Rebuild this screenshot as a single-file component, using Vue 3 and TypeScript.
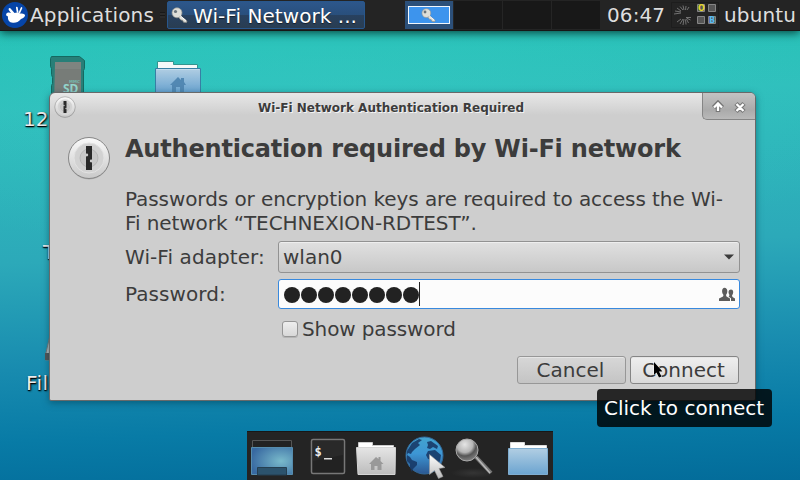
<script setup lang="ts">
import { ref } from 'vue'

const password = ref('12345678')
const workspaces = [0, 1, 2, 3]
</script>

<template>
  <div class="desktop">
    <svg class="icon-sd" width="38" height="50" viewBox="0 0 38 50">
      <path d="M2.500 .5h28l5 4v8l-1 2v35h-32v-20l1-2v-6l-1-3v-6l-1-2v-8z" fill="#287f78" stroke="#146960" />
      <path d="M6 6h26v44H5z" fill="#777c78" />
      <path d="M6 6h26v7H6z" fill="#868a86" opacity=".6" />
      <text><tspan x="20" y="27" class="mmc">MMC</tspan><tspan x="14" y="36.500" class="sd">SD</tspan></text>
    </svg>
    <svg class="icon-home" width="48" height="45" viewBox="0 0 48 45">
      <path d="M3.500 9V1.500h16v3h24V10z" fill="#f5f8f8" stroke="#33948f" />
      <path d="M1.500 8.500h45V44h-45z" fill="url(#folderHome)" stroke="#377fa4" />
      <path d="M2.500 9.500h43" stroke="#c3dced" />
      <path d="M16 25l8-8 3 3v-2h3v4l2 3h-2v7h-4v-5h-4v5h-4v-7z" fill="#5288b3" />
    </svg>
    <span class="label l-sd">128</span>
    <span class="label l-trash">Trash</span>
    <span class="label l-fs">File System</span>
    <svg class="icon-drive" width="10" height="26" viewBox="0 0 10 26"><path d="M.5 20L5 0h5v25H.5z" fill="#b9b9b9" stroke="#777" /><path d="M0 18h10v7H0z" fill="#555" /></svg>

    <header class="panel">
      <svg class="logo" width="26" height="26" viewBox="0 0 26 26">
        <circle cx="13" cy="13" r="13" fill="#0645a8" />
        <path d="M4.500 11.500C5.500 10 8 10.500 9 11L6.800 8C6 6 8 5.300 9 7l3.500 4c2-1 4-.7 5.500.5 2 0 4.500 0 5 1.500.4 1.500-1.500 3-4 4-2.500 3-5 4-8 3.800-4-.3-5.500-3-5-6.300-1.500-.5-2.500-1.500-1.500-3z" fill="#fff" />
        <path d="M14.800 5.500l.8 4.500M19.500 6l-2 4.500" stroke="#fff" stroke-width="1.700" stroke-linecap="round" />
      </svg>
      <span class="apps">Applications</span>
      <span class="grip"></span>
      <div class="task">
        <svg width="18" height="17" viewBox="0 0 18 17"><use href="#key" /></svg>
        <span>Wi-Fi Network ...</span>
      </div>
      <div class="pager">
        <div v-for="n in workspaces" :key="n" class="ws" :class="{ active: n === 0 }">
          <div v-if="n === 0" class="mini"><svg width="16" height="15" viewBox="0 0 18 17"><use href="#key" /></svg></div>
        </div>
      </div>
      <span class="clock">06:47</span>
      <svg class="tray" width="48" height="26" viewBox="0 0 48 26">
        <path d="M.5.5h47v25H.5z" fill="none" stroke="#1d1d1d" />
        <g fill="none" stroke="#858585" stroke-width=".8">
          <path d="M3 12l7-1M4 9l6 1M6 6l4 3M9 4.500l3 3.500M12 3.500l1 4.500M15 4l-.5 4M18 5l-2 3" />
          <path d="M6 20l4-3M9 22l3-5M12 23l1-6M15 22.500l-.5-5M17.500 21l-2-4M19.500 18l-4-2M20 15.500l-5 0" />
        </g>
        <path d="M26.500 2.500h7v7h-7zM37.500 2.500h7v7h-7zM26.500 14.500h7v7h-7zM37.500 14.500h7v7h-7z" fill="#565656" stroke="#858585" />
        <text x="27" y="9" class="led yellow">O</text>
        <text x="38" y="21" class="led blue">B</text>
      </svg>
      <span class="user">ubuntu</span>
    </header>

    <main class="dialog">
      <div class="titlebar">
        <svg width="22" height="22" viewBox="0 0 44 44"><use href="#lock" /></svg>
        <h1>Wi-Fi Network Authentication Required</h1>
        <div class="winbtns">
          <svg width="52" height="26" viewBox="0 0 52 26">
            <path d="M15 19v-8M10.500 14.500l4.500-4.500 4.500 4.500M33 10.500l8 8M41 10.500l-8 8" stroke="#777" stroke-width="4.500" fill="none" />
            <path d="M15 18v-7M11 14.500l4-4 4 4M33.500 11l7 7M40.500 11l-7 7" stroke="#fff" stroke-width="2.300" fill="none" />
          </svg>
        </div>
      </div>
      <div class="content">
        <svg class="biglock" width="44" height="44" viewBox="0 0 44 44"><use href="#lock" /></svg>
        <section class="form">
          <h2>Authentication required by Wi-Fi network</h2>
          <p>Passwords or encryption keys are required to access the Wi-<br />Fi network “TECHNEXION-RDTEST”.</p>
          <div class="field">
            <label>Wi-Fi adapter:</label>
            <div class="combo"><span>wlan0</span><svg width="10" height="6" viewBox="0 0 10 6"><path d="M0 .5h10L5 5.500z" fill="#3c3c3c" /></svg></div>
          </div>
          <div class="field second">
            <label>Password:</label>
            <div class="entry">
              <div class="dots"><i v-for="(c, k) in password" :key="k"></i></div>
              <b class="caret"></b>
              <svg width="17" height="14" viewBox="0 0 17 14" fill="#5c5c5c">
                <path d="M0 14v-2.500l4-2L4.500 8C2.500 6 2.500 1 5.500.8 9 1 9 6 7 8l.5 1.500 3.500 2V14z" />
                <path d="M9.700 9.800l.8-1.800C8.800 5.500 9.500 2.500 12 2.500s3 3.500 1 6l.5 1.500 2.500 1.500V14h-4v-2.800z" />
              </svg>
            </div>
          </div>
          <div class="check"><span class="box"></span>Show password</div>
          <div class="actions">
            <button type="button">Cancel</button>
            <button type="button" class="hover">Connect</button>
          </div>
        </section>
      </div>
    </main>

    <svg class="cursor" width="12" height="18" viewBox="0 0 12 18"><path d="M2 1v13l2.500-2.500 2.500 5 2.500-1-2.500-5h3.500z" fill="#000" stroke="#fff" stroke-width=".9" paint-order="stroke" /></svg>
    <div class="tooltip">Click to connect</div>

    <footer class="dock">
      <svg width="306" height="49" viewBox="0 0 306 49">
        <defs>
          <linearGradient id="folderHome" x2="0" y2="1"><stop stop-color="#b1cee3" /><stop offset=".65" stop-color="#6ba4d0" /></linearGradient>
          <linearGradient id="folderBlue" x2="0" y2="1"><stop stop-color="#b1cee3" /><stop offset="1" stop-color="#6ba4d0" /></linearGradient>
          <linearGradient id="folderGray" x2="0" y2="1"><stop stop-color="#e5e5e5" /><stop offset="1" stop-color="#bcbcbc" /></linearGradient>
          <radialGradient id="screen" cx=".72" cy=".5" r=".75"><stop stop-color="#79bacb" /><stop offset="1" stop-color="#3869a1" /></radialGradient>
          <linearGradient id="sea" x2="0" y2="1"><stop stop-color="#43a4cf" /><stop offset=".45" stop-color="#3d96d4" /><stop offset="1" stop-color="#2b5791" /></linearGradient>
          <radialGradient id="lens" cx=".4" cy=".25" r=".8"><stop stop-color="#e5e5e5" /><stop offset=".45" stop-color="#b5b5b5" /><stop offset=".65" stop-color="#555" /><stop offset="1" stop-color="#888" /></radialGradient>
          <radialGradient id="shade"><stop stop-color="#353535" /><stop offset="1" stop-color="#242424" /></radialGradient>
          <linearGradient id="metal" x2="0" y2="1"><stop stop-color="#fafafa" /><stop offset="1" stop-color="#c9c9c9" /></linearGradient>
          <linearGradient id="arrow" x2="0" y2="1"><stop stop-color="#fff" /><stop offset="1" stop-color="#bbb" /></linearGradient>
          <g id="key">
            <path d="M8.500 8L16 14l-.5 1.500-3-.3-1-2-1.700-.2-2-2.500" fill="#e2e2dd" stroke="#8b8b85" stroke-width=".8" />
            <circle cx="6" cy="5.800" r="5" fill="#deded8" stroke="#979792" stroke-width=".7" />
            <circle cx="4.500" cy="4.500" r="1.600" fill="#69747b" />
            <path d="M9 8.500l6 5.200" stroke="#fff" stroke-width="1" />
          </g>
          <g id="lock">
            <ellipse cx="22" cy="24" rx="20" ry="19.500" fill="#777" opacity=".4" />
            <circle cx="22" cy="22" r="20.500" fill="url(#metal)" stroke="#868686" />
            <circle cx="22" cy="22" r="15" fill="#d2d2d2" stroke="#e2e2e2" />
            <circle cx="22" cy="22" r="9" fill="#c7c7c7" stroke="#aaa" stroke-width=".6" />
            <path d="M19 10h6v24h-6z" fill="#292929" />
            <circle cx="19.800" cy="19" r="1.400" fill="#ccc" /><circle cx="24.200" cy="25" r="1.400" fill="#ccc" />
          </g>
        </defs>
        <path d="M5.500 8.500h39v9h-39z" fill="#222" stroke="#555" />
        <path d="M4.500 15.500h41v27h-41z" fill="url(#screen)" stroke="#568cad" />
        <path d="M10.500 43V35.500h29V43z" fill="#2c536d" stroke="#253f51" />
        <rect x="64.500" y="7.500" width="33" height="34" rx="1.500" fill="#222" stroke="#777" stroke-width="1.500" />
        <path d="M66 9h30v14L66 29z" fill="#292929" />
        <text x="67.500" y="23.500" class="prompt">$</text><path d="M77 26h8v1.500h-8z" fill="#ddd" />
        <path d="M111.500 17v-6.500h14v3h21V17z" fill="#fff" stroke="#ccc" />
        <path d="M109.500 15.500h39L148 42.500h-37z" fill="url(#folderGray)" stroke="#d5d5d5" />
        <path d="M122 32l7-7 2.500 2v-2h2v4l3 3h-2v6h-4v-4h-3v4h-3.500v-6z" fill="#999" />
        <circle cx="177.500" cy="23.500" r="18.500" fill="url(#sea)" stroke="#326a9b" />
        <path d="M160 19l5-8 7-4 3 1-4 3 2 2-5 4-3 3-1 2-3-1-1 2 3 2 2 3 5 2 0 3-4 4-1 3-2-4 0-4-3-3zM180 10l4-1 7 5-1 3-4-2-3 2-3-1 1-3zM181 19l7-1 6 5-1 6-4 5-3-6-5-1-2-4z" fill="#173865" opacity=".88" />
        <path d="M182.500 22.500v20l5-4 4 8 4.500-2-4-8 6-1z" fill="url(#arrow)" stroke="#999" stroke-width=".6" />
        <ellipse cx="226" cy="41" rx="22" ry="5" fill="url(#shade)" />
        <path d="M229 25l15 16" stroke="#777" stroke-width="4" /><path d="M229 25l14 16" stroke="#bbb" stroke-width="1.300" />
        <circle cx="220" cy="18" r="11" fill="url(#lens)" stroke="#aaa" />
        <path d="M263.500 17v-6.500h14v3h22V17z" fill="#fff" stroke="#ddd" />
        <path d="M261.500 16.500h39v26h-39z" fill="url(#folderBlue)" stroke="#7fadd0" />
      </svg>
    </footer>
  </div>
</template>

<style>
body { margin: 0; overflow: hidden; }
</style>

<style scoped>
* { box-sizing: border-box; }
.desktop { position: relative; width: 800px; height: 480px; overflow: hidden; font: 20px/24px "DejaVu Sans", sans-serif; color: #3c3c3c; background: radial-gradient(ellipse 620px 170px at 42% 18%, #38cbc566, transparent), linear-gradient(178deg, #24c2b5 5%, #2fbfbc 22%, #2ca9b9 52%, #188baf 73%, #087ba6 87%, #036c9a 100%); }
.panel { position: relative; display: flex; align-items: center; height: 31px; background: #242424; border-bottom: 1px solid #171717; box-shadow: 0 2px 9px #06463f; color: #dedede; }
.logo { margin-left: 2px; }
.apps { width: 128px; margin-left: 2px; letter-spacing: .15px; }
.grip { width: 5px; height: 6px; margin-left: 2px; background: repeating-linear-gradient(#191919 0 1px, #2b2b2b 1px 3px); }
.task { display: flex; align-items: center; gap: 4px; width: 198px; height: 28px; margin-left: 2px; padding-left: 3px; border: 1px solid #28578d; border-radius: 2px; background: linear-gradient(#2d578b, #294f7c 50%, #28415f 51%, #293d52); color: #fff; white-space: nowrap; text-shadow: 0 1px 1px #0008; }
.task span { letter-spacing: .06px; padding-top: 1px; }
.panel svg { flex: none; }
.pager { display: flex; gap: 1px; margin-left: 40px; background: #252525; }
.ws { width: 48px; height: 28px; background: #181818; }
.ws.active { padding: 5px 3px; background: #2c507a; }
.mini { display: grid; place-items: center; width: 42px; height: 18px; border: 1px solid #f2f6fb; background: #3d94ed; }
.clock { width: 61px; margin-left: 7px; letter-spacing: .1px; }
.tray { margin-left: 3px; }
.user { margin-left: 5px; letter-spacing: .15px; }
.led { font: bold 8px "DejaVu Sans", sans-serif; }
.yellow { fill: #e5d826; }
.blue { fill: #58baf2; }
.icon-sd { position: absolute; left: 49px; top: 56px; }
.icon-home { position: absolute; left: 154px; top: 60px; }
.icon-drive { position: absolute; left: 45px; top: 335px; }
.mmc { font: bold 4px "DejaVu Sans", sans-serif; fill: #76b9af; }
.sd { font: bold 12px "Noto Sans", sans-serif; fill: #94d5cc; }
.label { position: absolute; color: #ececec; text-shadow: 1px 1px 2px #000, 0 1px 1px #000; white-space: nowrap; }
.l-sd { left: 23px; top: 107px; }
.l-trash { left: 43px; top: 240px; }
.l-fs { left: 26px; top: 371px; letter-spacing: .4px; }
.dialog { position: absolute; left: 49px; top: 92px; width: 707px; height: 309px; overflow: hidden; border: 1px solid #696969; border-radius: 6px 6px 2px 2px; background: linear-gradient(#e7e7e7, #cecece 22px); box-shadow: 0 2px 7px #003c5088; }
.titlebar { display: flex; height: 27px; padding-left: 4px; align-items: flex-start; }
.titlebar > svg { margin-top: 3px; }
h1 { flex: 1; margin: 3px 0 0; padding-left: 4px; text-align: center; font-size: 12px; line-height: 24px; text-shadow: 1px 1px #f4f4f4; }
.winbtns { width: 53px; height: 27px; border: solid #858585; border-width: 0 0 1px 1px; border-radius: 0 0 0 5px; background: linear-gradient(#c3c3c3, #aaa 65%, #b9b9b9); }
.winbtns svg { display: block; }
.content { display: flex; padding: 16px 15px 0 17px; }
.biglock { flex: none; }
.form { flex: 1; margin-left: 14px; }
h2 { margin: -1px 0 0; font-size: 24px; line-height: 28px; letter-spacing: -.2px; white-space: nowrap; }
p { margin: 24px 0 0; letter-spacing: -.08px; white-space: nowrap; }
.field { display: flex; height: 32px; margin-top: 6px; align-items: center; }
.field.second { height: 30px; margin-top: 6px; }
label { width: 153px; letter-spacing: .08px; }
.combo { display: flex; flex: 1; height: 32px; align-items: center; justify-content: space-between; padding: 0 5px 0 4px; border: 1px solid #929292; border-radius: 3px; background: linear-gradient(#e0e0e0, #c8c8c8); box-shadow: inset 0 1px #eee; }
.entry { display: flex; flex: 1; height: 30px; align-items: center; padding: 0 4px 0 5px; border: 1px solid #3889de; border-radius: 3px; background: #fcfcfc; }
.dots { display: flex; gap: 1px; }
.dots i { width: 16px; height: 16px; border-radius: 50%; background: #222; margin-top: 2px; }
.caret { width: 1px; height: 24px; background: #222; }
.entry svg { margin-left: auto; margin-right: -1px; }
.check { display: flex; align-items: center; gap: 4px; margin: 8px 0 0 157px; letter-spacing: -.12px; }
.box { width: 16px; height: 16px; border: 1px solid #969696; border-radius: 3px; background: linear-gradient(#eee, #d8d8d8); box-shadow: 0 1px #b5b5b5; }
.actions { display: flex; justify-content: flex-end; gap: 4px; margin: 15px 1px 0 0; }
button { width: 109px; height: 28px; padding: 0 2px 0 0; border: 1px solid #979797; border-radius: 3px; background: linear-gradient(#d7d7d7, #c4c4c4); color: #3c3c3c; font: 20px/24px "DejaVu Sans", sans-serif; box-shadow: inset 0 1px #e5e5e5; }
.hover { border-color: #858585; background: linear-gradient(#efefef, #d9d9d9); }
.cursor { position: absolute; left: 652px; top: 361px; }
.tooltip { position: absolute; left: 597px; top: 389px; width: 175px; height: 38px; padding-left: 7px; line-height: 38px; border-radius: 4px; color: #fff; background: #000000d0; white-space: nowrap; }
.dock { position: absolute; left: 247px; top: 431px; width: 306px; height: 49px; background: #242424; border-top: 1px solid #171717; }
.dock svg { display: block; }
.prompt { font: bold 12px "DejaVu Sans Mono", monospace; fill: #eee; }
</style>
